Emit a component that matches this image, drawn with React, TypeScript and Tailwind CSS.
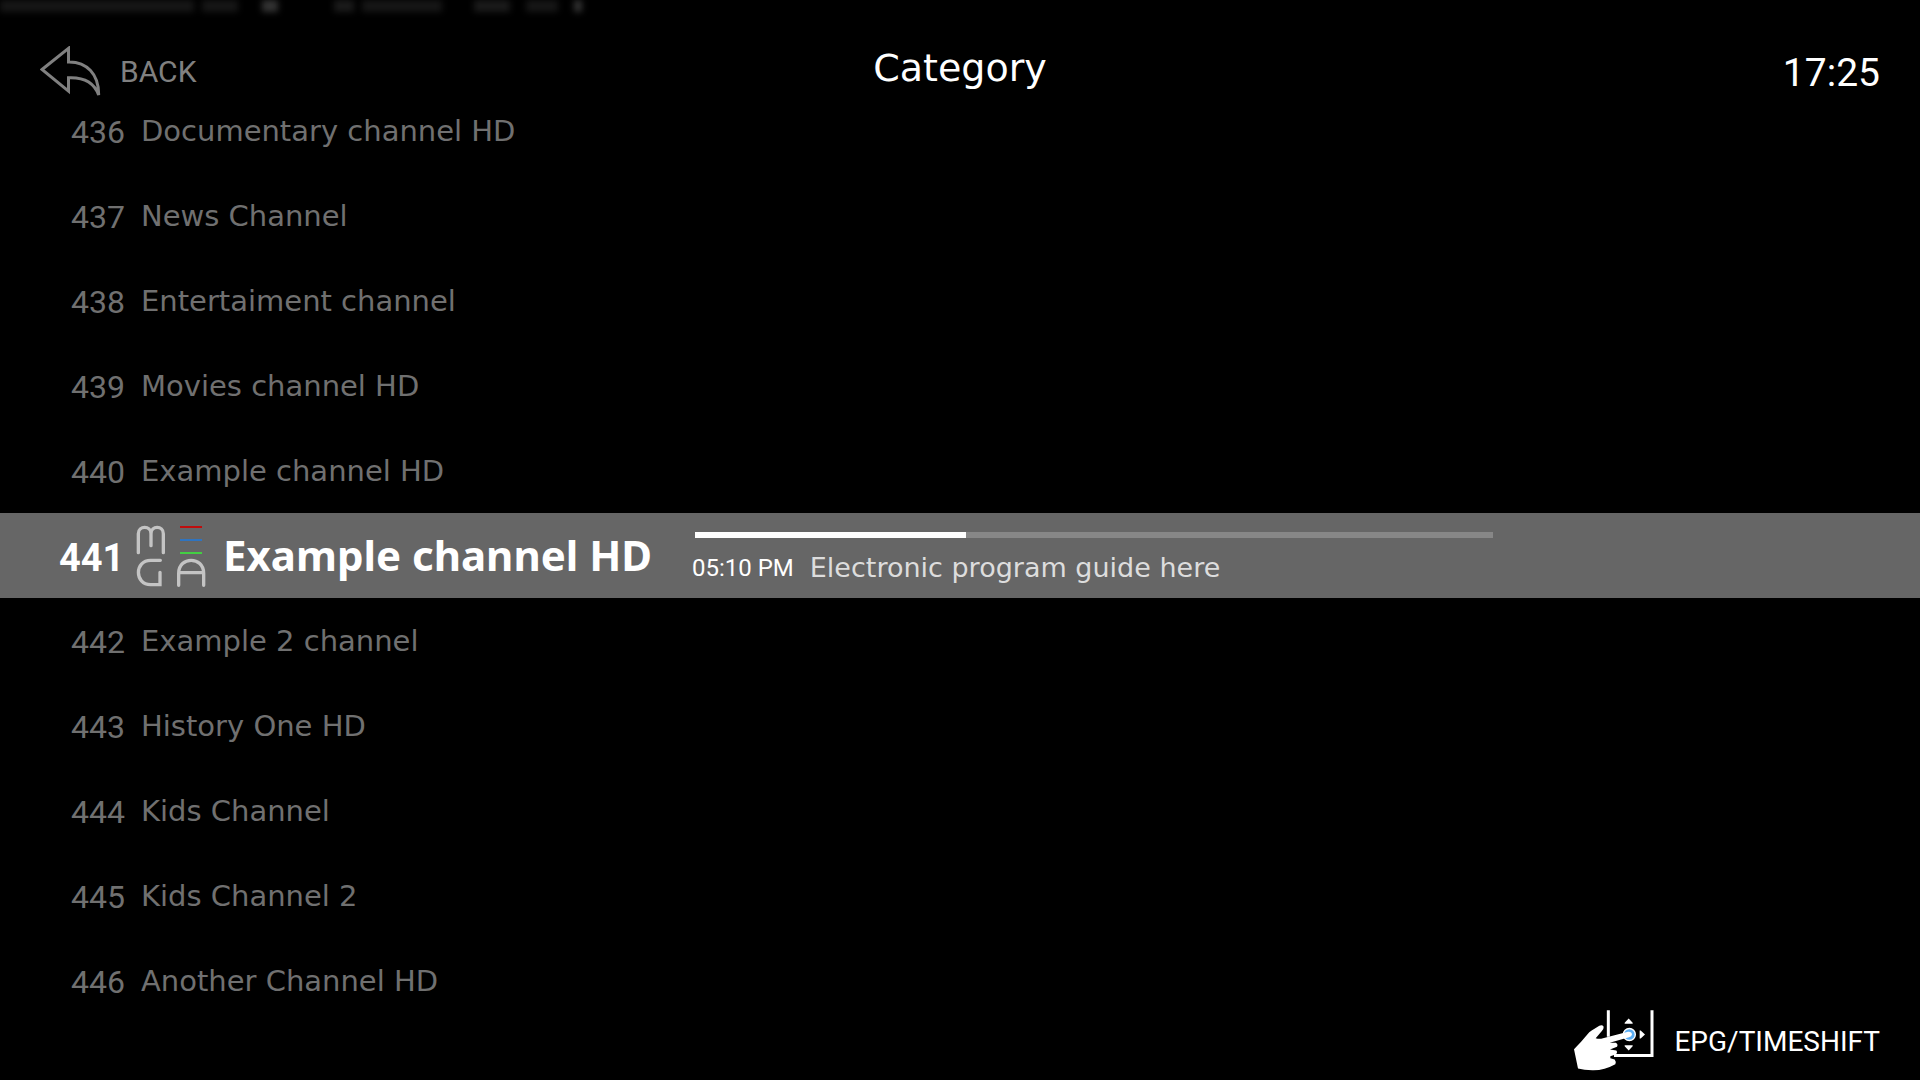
import { useState } from 'react';
import clsx from 'clsx';

type Channel = {
  number: number;
  name: string;
};

const channels: Channel[] = [
  { number: 436, name: 'Documentary channel HD' },
  { number: 437, name: 'News Channel' },
  { number: 438, name: 'Entertaiment channel' },
  { number: 439, name: 'Movies channel HD' },
  { number: 440, name: 'Example channel HD' },
  { number: 441, name: 'Example channel HD' },
  { number: 442, name: 'Example 2 channel' },
  { number: 443, name: 'History One HD' },
  { number: 444, name: 'Kids Channel' },
  { number: 445, name: 'Kids Channel 2' },
  { number: 446, name: 'Another Channel HD' },
];

const program = { time: '05:10 PM', title: 'Electronic program guide here', progress: 34 };

function BackIcon() {
  return (
    <svg viewBox="60 43 182 154" className="w-[61px] h-[51px]" fill="none" stroke="#808080" strokeWidth="9" aria-hidden="true">
      <path d="M65 114 L145 50 V91 C200 90 237 128 236 191 C222 152 190 137 145 139 V179 Z" />
    </svg>
  );
}

function MegaLogo() {
  return (
    <svg viewBox="48 42 213 195" className="w-[71px] h-[65px]" fill="none" strokeWidth="10" strokeLinecap="round" role="img" aria-label="Mega">
      <g stroke="#c4c4c4">
        <path d="M55 128 V71 C55 46 93 46 93 71 V107 M93 71 C93 46 130 46 130 71 V128" />
        <path d="M121 151 H92 C43 151 43 224 92 224 H120 V187" />
        <path d="M176 226 V190 C176 138 251 138 251 190 V226 M176 188 H251" />
      </g>
      <g strokeWidth="6" strokeLinecap="butt">
        <path d="M180 51 H246" stroke="#c00d0d" />
        <path d="M180 90 H246" stroke="#2f74c0" />
        <path d="M180 129 H246" stroke="#43cf43" />
      </g>
    </svg>
  );
}

function RemoteIcon() {
  return (
    <svg viewBox="37 30 243 182" className="w-[81px] h-[61px]" fill="#fff" aria-hidden="true">
      <path d="M143 30 V110 M274 30 V166 H160" fill="none" stroke="#fff" strokeWidth="9" />
      <path d="M204 55 L216 68 V71 H192 V68 Z M253 103 L240 115 H237 V91 H240 Z M204 151 L192 138 V135 H216 V138 Z" />
      <circle cx="206" cy="103" r="18" fill="#5aaef5" stroke="#fff" strokeWidth="4" />
      <path d="M40 147 L62 124 L78 105 Q86 95 93 91 L116 77 Q125 73 129 80 Q130 86 123 93 L105 114 Q116 117 127 114 L202 95 Q213 94 214 103 Q213 109 205 111 L147 128 H166 Q173 133 169 140 L148 148 L167 151 Q172 157 165 163 L149 168 V174 L162 178 Q167 184 164 192 Q130 211 95 210 Q70 210 52 205 Z" />
    </svg>
  );
}

// Faint out-of-focus glow at the very top of the screen
function TopGlow() {
  return (
    <div className="absolute top-0 left-0 h-3 flex blur-[3px]" aria-hidden="true">
      <span className="w-[194px] bg-[#161616]" />
      <span className="ml-2 w-9 bg-[#161616]" />
      <span className="ml-6 w-4 bg-[#333333]" />
      <span className="ml-14 w-5 bg-[#1a1a1a]" />
      <span className="ml-2 w-20 bg-[#161616]" />
      <span className="ml-8 w-9 bg-[#1a1a1a]" />
      <span className="ml-4 w-8 bg-[#161616]" />
      <span className="ml-4 w-2 bg-[#333333]" />
    </div>
  );
}

function ProgramInfo() {
  return (
    <div className="w-[801px] pt-1 flex flex-col gap-3">
      <div
        className="ml-[3px] h-1.5 bg-[#878787]"
        role="progressbar"
        aria-label="Program progress"
        aria-valuenow={program.progress}
      >
        <div className="h-full bg-white" style={{ width: `${program.progress}%` }} />
      </div>
      <div className="flex items-center gap-4">
        <span className="font-[Roboto] text-[24px] leading-9 text-white">{program.time}</span>
        <span className="text-[27px] leading-9 text-[#dddddd]">{program.title}</span>
      </div>
    </div>
  );
}

export default function App() {
  const [selected, setSelected] = useState(441);

  return (
    <div className="relative min-h-screen overflow-hidden bg-black font-['DejaVu_Sans',sans-serif]">
      <TopGlow />

      <header className="grid grid-cols-3 h-[88px] px-10">
        <button className="flex items-center gap-[19px] pt-[54px] h-[88px] justify-self-start font-[Roboto] text-[30px] text-[#808080]">
          <BackIcon />
          BACK
        </button>
        <h1 className="pt-12 justify-self-center text-[38px] leading-10 text-white">Category</h1>
        <time className="pt-[53px] justify-self-end font-[Roboto] text-[39px] leading-10 text-white">17:25</time>
      </header>

      <ul>
        {channels.map(({ number, name }) => {
          const active = number === selected;
          return (
            <li key={number}>
              <button
                onClick={() => setSelected(number)}
                className={clsx(
                  'flex items-center w-full h-[85px] pt-0.5 text-left whitespace-nowrap',
                  active ? 'pl-[59px] bg-[#666666] text-white font-bold' : 'pl-[71px] text-[#707070]'
                )}
              >
                <span className={clsx('font-[Roboto]', active ? 'w-[77px] pt-1 text-[38px]' : 'w-[70px] text-[32px]')}>
                  {number}
                </span>
                {active && <MegaLogo />}
                <span className={clsx(active ? "ml-4 pb-1 w-[469px] font-['Noto_Sans'] text-[42px]" : 'text-[29px]')}>
                  {name}
                </span>
                {active && (
                  <div className="font-normal">
                    <ProgramInfo />
                  </div>
                )}
              </button>
            </li>
          );
        })}
      </ul>

      <button className="absolute right-10 bottom-[9px] flex items-center gap-5 font-[Roboto] text-[28px] text-white">
        <RemoteIcon />
        <span className="pt-0.5">EPG/TIMESHIFT</span>
      </button>
    </div>
  );
}
